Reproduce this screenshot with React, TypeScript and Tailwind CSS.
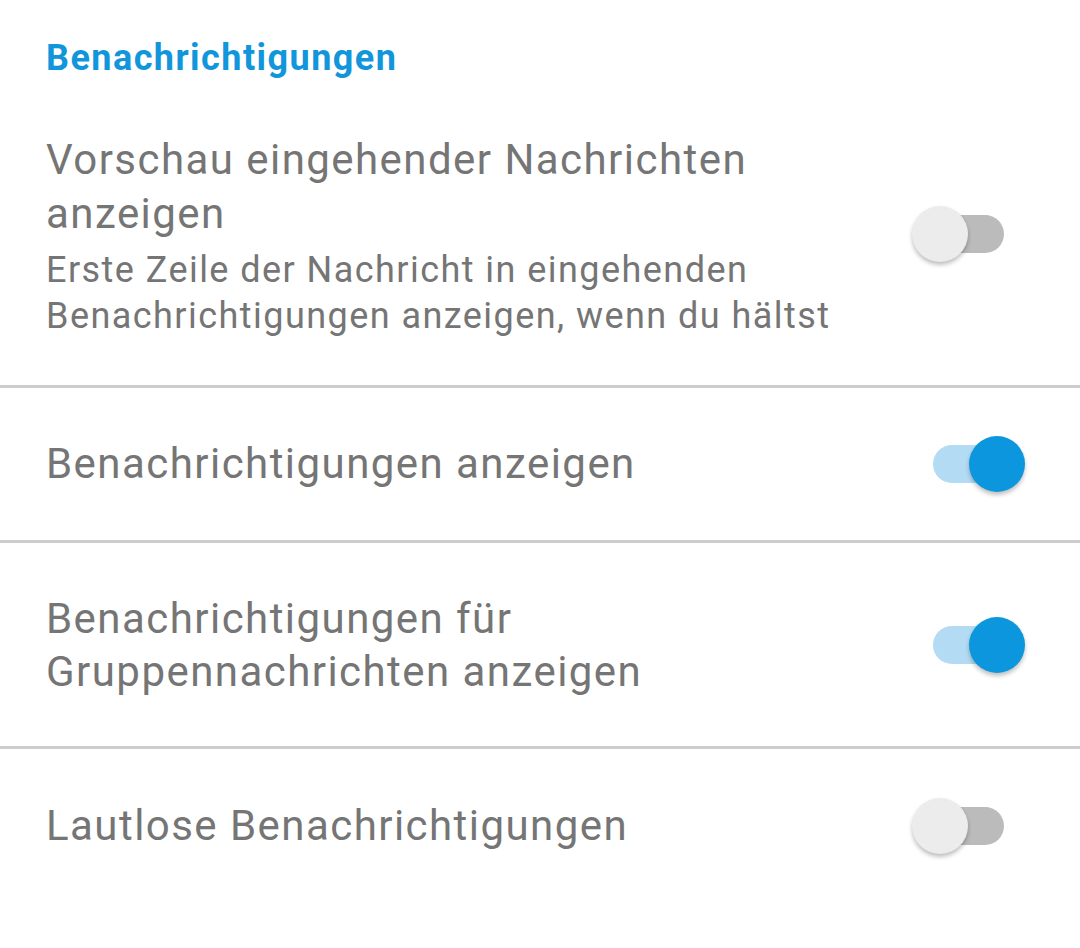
import React from "react";

function Toggle({ on }: { on: boolean }) {
  return (
    <div className="relative h-[56px] w-[113px] shrink-0">
      <div
        className={
          on
            ? "absolute left-[21px] top-[9px] h-[38px] w-[71px] rounded-full bg-[#b3dcf4]"
            : "absolute left-[21px] top-[9px] h-[38px] w-[71px] rounded-full bg-[#bbbbbb]"
        }
      />
      <div
        className={
          on
            ? "absolute left-[57px] top-0 h-[56px] w-[56px] rounded-full bg-[#0b96de] shadow-[0_3px_4px_rgba(0,0,0,0.25)]"
            : "absolute left-0 top-0 h-[56px] w-[56px] rounded-full bg-[#ececec] shadow-[0_3px_4px_rgba(0,0,0,0.25)]"
        }
      />
    </div>
  );
}

function Divider() {
  return <div className="h-[3px] w-full bg-[#cccccc]" />;
}

export default function App() {
  return (
    <div
      className="h-[948px] w-[1080px] overflow-hidden bg-white tracking-[1.45px] text-[#757575]"
      style={{ fontFamily: "Roboto, 'Noto Sans', sans-serif" }}
    >
      <div className="flex h-[82px] items-end pl-[46px]">
        <h2 className="text-[36px] font-bold leading-[48px] text-[#1296db]">
          Benachrichtigungen
        </h2>
      </div>

      <div className="flex h-[303px] items-center justify-between pl-[46px] pr-[55px]">
        <div>
          <p className="text-[42px] leading-[54px]">
            Vorschau eingehender Nachrichten
            <br />
            anzeigen
          </p>
          <p className="mt-[6px] -mb-[4px] text-[36px] leading-[46px]">
            Erste Zeile der Nachricht in eingehenden
            <br />
            Benachrichtigungen anzeigen, wenn du hältst
          </p>
        </div>
        <Toggle on={false} />
      </div>
      <Divider />

      <div className="flex h-[152px] items-center justify-between pl-[46px] pr-[55px]">
        <p className="text-[42px] leading-[54px]">Benachrichtigungen anzeigen</p>
        <Toggle on={true} />
      </div>
      <Divider />

      <div className="flex h-[203px] items-center justify-between pl-[46px] pr-[55px]">
        <p className="text-[42px] leading-[53px]">
          Benachrichtigungen für
          <br />
          Gruppennachrichten anzeigen
        </p>
        <Toggle on={true} />
      </div>
      <Divider />

      <div className="flex h-[154px] items-center justify-between pl-[46px] pr-[55px]">
        <p className="text-[42px] leading-[54px]">Lautlose Benachrichtigungen</p>
        <Toggle on={false} />
      </div>
    </div>
  );
}
